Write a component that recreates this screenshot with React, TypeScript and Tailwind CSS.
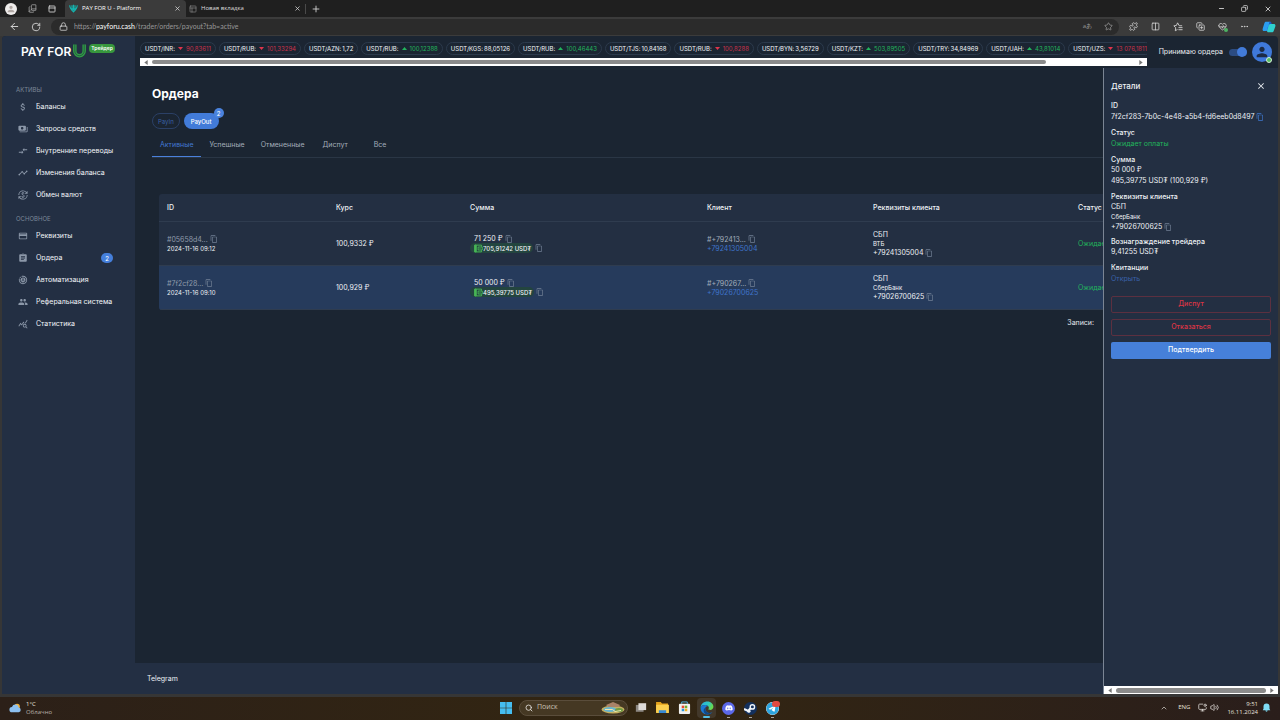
import type { ReactNode } from "react";
import {
  MdAttachMoney, MdPayments, MdCompareArrows, MdTimeline, MdCurrencyExchange, MdOutlineCreditCard,
  MdAssignment, MdMotionPhotosAuto, MdPeople, MdQueryStats, MdContentCopy, MdClose, MdPerson,
} from "react-icons/md";
import { FaDiscord, FaSteam, FaTelegram } from "react-icons/fa6";
import {
  ArrowLeft, RotateCw, Lock, Star, X, Plus, Minus, Copy, Puzzle, Columns2, Ellipsis, PanelTop,
  Search, ChevronUp, Volume2, MonitorDot, PanelsTopLeft, HeartPulse, BookCopy, CopyPlus,
} from "lucide-react";

type Rate = { pair: string; value: string; trend?: "up" | "down" };

const rates: Rate[] = [
  { pair: "USDT/INR:", value: "90,83611", trend: "down" },
  { pair: "USDT/RUB:", value: "101,33294", trend: "down" },
  { pair: "USDT/AZN:", value: "1,72" },
  { pair: "USDT/RUB:", value: "100,12388", trend: "up" },
  { pair: "USDT/KGS:", value: "88,05126" },
  { pair: "USDT/RUB:", value: "100,46443", trend: "up" },
  { pair: "USDT/TJS:", value: "10,84168" },
  { pair: "USDT/RUB:", value: "100,8288", trend: "down" },
  { pair: "USDT/BYN:", value: "3,56729" },
  { pair: "USDT/KZT:", value: "503,89505", trend: "up" },
  { pair: "USDT/TRY:", value: "34,84969" },
  { pair: "USDT/UAH:", value: "43,81014", trend: "up" },
  { pair: "USDT/UZS:", value: "13 076,1811", trend: "down" },
];

const assets = [
  { label: "Балансы", Icon: MdAttachMoney },
  { label: "Запросы средств", Icon: MdPayments },
  { label: "Внутренние переводы", Icon: MdCompareArrows },
  { label: "Изменения баланса", Icon: MdTimeline },
  { label: "Обмен валют", Icon: MdCurrencyExchange },
];

const general = [
  { label: "Реквизиты", Icon: MdOutlineCreditCard },
  { label: "Ордера", Icon: MdAssignment, count: 2 },
  { label: "Автоматизация", Icon: MdMotionPhotosAuto },
  { label: "Реферальная система", Icon: MdPeople },
  { label: "Статистика", Icon: MdQueryStats },
];

const orders = [
  { id: "#05658d4...", date: "2024-11-16 09:12", rate: "100,9332 ₽", sum: "71 250 ₽", usdt: "705,91242 USD₮", client: "#+792413...", phone: "+79241305004", bank: "ВТБ" },
  { id: "#7f2cf28...", date: "2024-11-16 09:10", rate: "100,929 ₽", sum: "50 000 ₽", usdt: "495,39775 USD₮", client: "#+790267...", phone: "+79026700625", bank: "СберБанк", selected: true },
];

const ui = "font-['Open_Sans','Noto_Sans',sans-serif]";

function CopyButton({ blue = false }: { blue?: boolean }) {
  return (
    <button aria-label="Копировать" className={blue ? "shrink-0 text-[#3f78d0]" : "shrink-0 text-[#728095]"}>
      <MdContentCopy className="size-2" />
    </button>
  );
}

function EdgeLogo() {
  return (
    <svg viewBox="0 0 24 24" className="size-3.5">
      <defs>
        <linearGradient id="edge-top" x1="0" y1="0" x2="1" y2="0.4">
          <stop offset="0" stopColor="#2aa9e6" />
          <stop offset="0.6" stopColor="#2fc8c0" />
          <stop offset="1" stopColor="#68d84c" />
        </linearGradient>
      </defs>
      <path d="M1 11C2 4.500 7 1 12.500 1 19 1 23 5.500 23 10c0 3.500-2.500 5.500-5.500 5.500-2 0-3.500-.8-3.200-1.600.9-1.200.9-1.900.9-2.400C15 9 12 7 8.500 7 5 7 2 8.500 1 11z" fill="url(#edge-top)" />
      <path d="M1 11c1-2.500 4-4 7.500-4C11 7 13 8 14 9.300c-3-.8-5 1.200-5 4C9 18 13 21 17 20.500c1.800-.2 3.300-.9 4.500-1.700C19.500 21.500 16 23 12.500 23 6 23 .5 18 1 11z" fill="#1b78d4" />
      <path d="M9 13.300c0 4.700 4 7.700 8 7.200 1.800-.2 3.300-.9 4.500-1.700-2 2.700-5.500 4.200-9 4.200C8 23 6 19 6.200 16 6.400 14 7.500 12.500 9.300 11.500 9 12 9 12.700 9 13.300z" fill="#114a8b" />
    </svg>
  );
}

function CopilotLogo() {
  return (
    <svg viewBox="0 0 24 24" className="size-3.5">
      <path d="M7 3h6c2 0 2.600 1 2 3l-3 10c-.6 2-1.600 3-3.500 3H4c-3 0-3.500-2-2.700-4.500l2.500-8C4.500 4 5.500 3 7 3z" fill="#2b9df0" />
      <path d="M13 3c2 0 3 1 3.500 3L17 8h-3.500c-2 0-2.500 1-3 2.500L8.300 18c-.5 1-1.300 1-2.300 1 2 0 3-1.500 3.500-3l2.500-9c.5-2 .4-4 1-4z" fill="#1b56c9" />
      <path d="M15 7h5c3 0 3.500 2 2.700 4.500l-2.500 7c-.7 2-1.700 2.500-3.200 2.500h-6c-2 0-2.500-1-2-3l2.500-8C12 8 13 7 15 7z" fill="#2fd0cf" />
    </svg>
  );
}

function FavoritesIcon() {
  return (
    <svg viewBox="0 0 24 24" className="size-[10px]" fill="none" stroke="currentColor" strokeWidth="2" strokeLinecap="round" strokeLinejoin="round">
      <path d="M21 9h-6L11 2 8.200 8.300 2 9.200l4.500 4.600L5.500 21l4.500-2.700M14 13.500h8M14 18.500h8" />
    </svg>
  );
}

function BrowserChrome() {
  return (
    <header className={`${ui} text-[#dcdcdc]`}>
      <div className="flex h-[17px] items-center bg-[#1f1f1f]">
        <div className="flex w-[65px] items-center gap-[11px] pl-[5px]">
          <span className="flex size-3 items-center justify-center rounded-full bg-[#efedec] text-[#b0a8a4]"><MdPerson className="size-[10px]" /></span>
          <BookCopy className="size-[9px] text-[#a8a8a8]" strokeWidth={2} />
          <PanelTop className="size-2" strokeWidth={2.500} />
        </div>
        <div className="flex h-full w-[121px] items-center rounded-t-[4px] bg-[#3b3b3b] pr-[5px] pl-1">
          <svg viewBox="0 0 24 24" className="size-[9px]" fill="none" stroke="#14b5b0" strokeWidth="3">
            <path d="M2 3c0 8 4 12 10 18 6-6 10-10 10-18M8 3v9l4 4 4-4V3M12 2v12" />
          </svg>
          <span className="ml-1 flex-1 text-[6px] text-white">PAY FOR U - Platform</span>
          <button aria-label="Закрыть вкладку"><X className="size-[7px]" strokeWidth={2.500} /></button>
        </div>
        <div className="flex w-[119px] items-center pr-1 pl-[3px]">
          <PanelsTopLeft className="size-2 text-[#8b8b8b]" strokeWidth={2} />
          <span className="ml-1 flex-1 text-[6px]">Новая вкладка</span>
          <button aria-label="Закрыть вкладку"><X className="size-[7px]" strokeWidth={2.500} /></button>
        </div>
        <button aria-label="Новая вкладка" className="border-l border-[#4a4a4a] pl-[5px]"><Plus className="size-[10px]" /></button>
        <div className="ml-auto flex items-center gap-4 pr-2">
          <button aria-label="Свернуть"><Minus className="size-[7px]" strokeWidth={3} /></button>
          <button aria-label="Восстановить"><Copy className="size-[7px] rotate-90" strokeWidth={2.500} /></button>
          <button aria-label="Закрыть"><X className="size-2" strokeWidth={2.500} /></button>
        </div>
      </div>
      <div className="flex h-[19px] items-center bg-[#3b3b3b] pr-1 pl-[9px]">
        <button aria-label="Назад"><ArrowLeft className="size-[11px]" /></button>
        <button aria-label="Обновить" className="ml-[11px]"><RotateCw className="size-[10px]" /></button>
        <div className="ml-2.5 flex h-4 flex-1 items-center rounded-full bg-[#2b2b2b] pr-1.5 pl-2">
          <Lock className="size-[9px]" strokeWidth={2} />
          <span className="ml-1.5 font-[Lato,sans-serif] text-[7px] text-[#979797]">https://<span className="text-white">payforu.cash</span>/trader/orders/payout?tab=active</span>
          <span className="ml-auto text-[6px] text-[#9a9a9a]">аあ</span>
          <Star className="ml-3 size-[9px] text-[#9a9a9a]" />
        </div>
        <div className="ml-2.5 flex items-center gap-[13px]">
          <Puzzle className="size-[9px]" />
          <Columns2 className="size-[9px]" />
          <FavoritesIcon />
          <CopyPlus className="size-[9px]" />
          <span className="relative">
            <HeartPulse className="size-[9px]" />
            <span className="absolute -right-px -bottom-px size-1 rounded-full bg-[#4db363]" />
          </span>
          <Ellipsis className="size-[9px]" />
          <CopilotLogo />
        </div>
      </div>
    </header>
  );
}

function NavGroup({ title, items }: { title: string; items: { label: string; Icon: typeof MdPeople; count?: number }[] }) {
  return (
    <section className="mb-px">
      <h2 className="h-[18px] pt-[7px] pl-3.5 text-[6px] leading-[9px] text-[#7b8798]">{title}</h2>
      {items.map(({ label, Icon, count }) => (
        <a key={label} href="#" className="flex h-[22px] items-center pr-[22px] pl-4 text-[7px] whitespace-nowrap text-[#f1f4f8]">
          <Icon className="size-[10px] shrink-0 text-[#8c98a9]" />
          <span className="ml-2">{label}</span>
          {count && <span className="ml-auto flex h-[10px] w-3 items-center justify-center rounded-full bg-[#457fdb] text-[6px] font-medium text-white">{count}</span>}
        </a>
      ))}
    </section>
  );
}

function Sidebar() {
  return (
    <aside className="w-[133px] shrink-0 bg-[#232f43]">
      <div className="flex h-[42px] items-start pt-[7px] pl-[19px]">
        <span className="text-[12px] leading-[18px] font-semibold whitespace-nowrap text-white">PAY FOR</span>
        <svg viewBox="0 0 30 32" className="mt-px ml-px h-[15px] w-[15px] shrink-0" fill="none">
          <path d="M5 1v14a10 10 0 0 0 20 0V1" stroke="#2f9e44" strokeWidth="7.500" />
          <path d="M5 1v14a10 10 0 0 0 20 0V1" stroke="#232f43" strokeWidth="1.300" />
        </svg>
        <span className="mt-px ml-0.5 flex h-[9px] items-center rounded-sm bg-[#37973d] px-0.5 text-[5px] font-semibold text-white">Трейдер</span>
      </div>
      <nav>
        <NavGroup title="АКТИВЫ" items={assets} />
        <NavGroup title="ОСНОВНОЕ" items={general} />
      </nav>
    </aside>
  );
}

function ScrollTrack({ children }: { children: ReactNode }) {
  return (
    <div className="flex h-2 shrink-0 items-center bg-white px-1">
      <svg viewBox="0 0 4 6" className="h-[5px] w-1 shrink-0"><path d="M4 0v6L0 3z" fill="#777" /></svg>
      <div className="mx-1 flex-1">{children}</div>
      <svg viewBox="0 0 4 6" className="h-[5px] w-1 shrink-0"><path d="M0 0v6l4-3z" fill="#777" /></svg>
    </div>
  );
}

function TrendArrow({ trend }: { trend: "up" | "down" }) {
  return (
    <svg viewBox="0 0 5 3" className="mx-[3px] h-[3px] w-[5px]">
      {trend === "up" ? <path d="M0 3h5L2.500 0z" fill="#22b45c" /> : <path d="M0 0h5L2.500 3z" fill="#e0354c" />}
    </svg>
  );
}

function TopBar() {
  return (
    <div className="flex h-8 pl-[5px]">
      <div className="min-w-0 flex-1">
        <div className="flex h-[22px] items-center gap-[3px] overflow-hidden pt-0.5">
          {rates.map((r, i) => (
            <div key={i} className="flex h-[13px] shrink-0 items-center rounded-full border border-[#2c3a4c] px-1 text-[6px] whitespace-nowrap text-[#f3f6f9]">
              {r.pair}
              {r.trend && <TrendArrow trend={r.trend} />}
              <span className={r.trend === "up" ? "text-[#22b45c]" : r.trend === "down" ? "text-[#c9314a]" : "ml-px"}>{r.value}</span>
            </div>
          ))}
        </div>
        <ScrollTrack><div className="h-1 w-[91%] rounded-full bg-[#8b8b8b]" /></ScrollTrack>
      </div>
      <div className="flex items-center pr-1.5 pl-3">
        <label htmlFor="accept" className="text-[7px] text-[#e8ecf1]">Принимаю ордера</label>
        <span className="relative ml-1.5 flex h-2 w-[18px] items-center">
          <input id="accept" type="checkbox" defaultChecked className="h-[7px] w-full appearance-none rounded-full bg-[#2c4c82]" />
          <span className="pointer-events-none absolute right-0 size-[10px] rounded-full bg-[#427bd9]" />
        </span>
        <button aria-label="Профиль" className="relative ml-[5px] flex size-5 items-center justify-center rounded-full bg-[#3f79da] text-[#1c2b45]">
          <MdPerson className="size-4" />
          <span className="absolute right-0 -bottom-px size-[6px] rounded-full border border-[#d5efd8] bg-[#58bd62]" />
        </button>
      </div>
    </div>
  );
}

function WalletIcon() {
  return (
    <svg viewBox="0 0 24 24" className="size-[9px] shrink-0" fill="none" stroke="#48b556" strokeWidth="2.500">
      <path d="M20 7V3H2v18h18v-4" />
      <path d="M2 3h4v18H2z" fill="#48b556" />
      <path d="M11 8h11v8H11z" />
      <circle cx="16" cy="12" r="0.500" />
    </svg>
  );
}

function OrdersTable() {
  return (
    <table className="w-full table-fixed border-separate border-spacing-0 overflow-hidden rounded-[3px] bg-[#232f42] text-left text-[7px] whitespace-nowrap text-[#eef1f5]">
      <thead>
        <tr className="h-7 [&>th]:border-b [&>th]:border-[#2f3c4f] [&>th]:px-2 [&>th]:pt-px [&>th]:pb-0 [&>th]:font-medium">
          <th className="w-[169px]">ID</th>
          <th className="w-[134px]">Курс</th>
          <th className="w-[237px]">Сумма</th>
          <th className="w-[166px]">Клиент</th>
          <th className="w-[205px]">Реквизиты клиента</th>
          <th>Статус</th>
        </tr>
      </thead>
      <tbody className="[&_td]:border-b [&_td]:border-[#2f3c4f] [&_td]:px-2 [&_td]:py-0">
        {orders.map((o) => (
          <tr key={o.id} className={o.selected ? "h-11 bg-[#263b5c] leading-[9px]" : "h-11 leading-[9px]"}>
            <td>
              <div className="flex items-center gap-0.5 text-[#8f9bab]">{o.id}<CopyButton /></div>
              <div className="text-[6px]">{o.date}</div>
            </td>
            <td>{o.rate}</td>
            <td>
              <div className="flex items-center gap-0.5 pl-1">{o.sum}<CopyButton /></div>
              <div className="flex items-center gap-0.5">
                <span className="flex h-[10px] items-center rounded-full bg-[#23453f] pr-0.5 pl-1 text-[6px] font-medium"><WalletIcon />{o.usdt}</span>
                <CopyButton />
              </div>
            </td>
            <td>
              <div className="flex items-center gap-0.5 text-[#a2adba]">{o.client}<CopyButton /></div>
              <a href="#" className="block text-[#3f74cb]">{o.phone}</a>
            </td>
            <td>
              <div>СБП</div>
              <div className="text-[6px]">{o.bank}</div>
              <div className="flex items-center gap-0.5">{o.phone}<CopyButton /></div>
            </td>
            <td className="text-[#22b45c]">Ожидает оплаты</td>
          </tr>
        ))}
      </tbody>
    </table>
  );
}

function Orders() {
  return (
    <main className="flex-1 pt-[18px] pl-[17px]">
      <h1 className="text-[12px] leading-4 font-bold text-white">Ордера</h1>
      <div className="mt-[11px] flex gap-1 text-[6px]">
        <button className="h-4 rounded-full border border-[#2b4066] px-[5px] text-[#3a60a6]">PayIn</button>
        <button className="relative h-4 rounded-full bg-[#427bd8] px-[7px] font-medium text-white">
          PayOut
          <span className="absolute -top-[5px] -right-[5px] flex size-[10px] items-center justify-center rounded-full bg-[#4a83de] text-[6px]">2</span>
        </button>
      </div>
      <div role="tablist" className="mt-[5px] flex h-6 border-b border-[#2a3645] text-[7px] text-[#a3adba]">
        <button role="tab" aria-selected="true" className="min-w-[45px] border-b border-[#4a80dc] px-2 text-[#4379d4]">Активные</button>
        <button role="tab" className="min-w-[45px] px-2">Успешные</button>
        <button role="tab" className="min-w-[45px] px-2">Отмененные</button>
        <button role="tab" className="min-w-[45px] px-2">Диспут</button>
        <button role="tab" className="min-w-[45px] px-2">Все</button>
      </div>
      <div className="pt-9 pr-6 pl-[7px]">
        <OrdersTable />
        <div className="flex justify-end pt-2 pr-40 text-[7px] text-[#e3e7ed]">Записи:</div>
      </div>
    </main>
  );
}

function Section({ title, children }: { title: string; children: ReactNode }) {
  return (
    <section className="mb-1.5 leading-[10px]">
      <h3 className="font-medium">{title}</h3>
      {children}
    </section>
  );
}

function DetailsDrawer() {
  return (
    <aside className="absolute inset-y-0 right-0 flex w-[175px] flex-col border-l border-[#7b8594] bg-[#232f42] text-[7px] text-[#eef1f5]">
      <div className="flex-1 px-[7px] pt-3">
        <div className="mb-[9px] flex h-3 items-center justify-between pr-[5px]">
          <h2 className="text-[8px] font-medium">Детали</h2>
          <button aria-label="Закрыть"><MdClose className="size-[10px]" /></button>
        </div>
        <Section title="ID">
          <div className="flex items-center gap-0.5 leading-[11px] whitespace-nowrap">7f2cf283-7b0c-4e48-a5b4-fd6eeb0d8497<CopyButton blue /></div>
        </Section>
        <Section title="Статус"><div className="leading-[11px] text-[#22b45c]">Ожидает оплаты</div></Section>
        <Section title="Сумма">
          <div>50 000 ₽</div>
          <div className="leading-[11px]">495,39775 USD₮ (100,929 ₽)</div>
        </Section>
        <Section title="Реквизиты клиента">
          <div>СБП</div>
          <div className="text-[6px]">СберБанк</div>
          <div className="flex items-center gap-0.5 leading-[9px]">+79026700625<CopyButton /></div>
        </Section>
        <Section title="Вознаграждение трейдера"><div>9,41255 USD₮</div></Section>
        <Section title="Квитанции"><a href="#" className="block leading-[11px] text-[#3a62ab]">Открыть</a></Section>
        <div className="mt-3 flex flex-col gap-1.5 font-medium">
          <button className="h-[17px] rounded-[2px] border border-[#5c3040] text-[#dc3545]">Диспут</button>
          <button className="h-[17px] rounded-[2px] border border-[#5c3040] text-[#dc3545]">Отказаться</button>
          <button className="h-[17px] rounded-[2px] bg-[#4680da] text-white">Подтвердить</button>
        </div>
      </div>
      <ScrollTrack><div className="h-[5px] w-full rounded-full bg-[#8b8b8b]" /></ScrollTrack>
    </aside>
  );
}

function Taskbar() {
  return (
    <footer className={`${ui} grid h-[23px] shrink-0 grid-cols-[1fr_auto_1fr] items-center bg-linear-to-r from-[#2c2018] via-[#332611] to-[#2a1e1b] pb-0.5 text-[6px] text-[#e6e2dd]`}>
      <div className="flex items-center gap-1 pl-[9px]">
        <svg viewBox="0 0 24 18" className="h-[10px] w-[13px]">
          <circle cx="15" cy="6" r="5" fill="#f2b23c" />
          <path d="M6 17a5 5 0 0 1-.5-10A6.500 6.500 0 0 1 18 8a4.600 4.600 0 0 1 0 9z" fill="#8cc0f0" />
        </svg>
        <div className="leading-2"><div>1°C</div><div className="text-[#b9b2aa]">Облачно</div></div>
      </div>
      <div className="flex items-center pl-0.5">
        <svg viewBox="0 0 12 12" className="size-3" fill="#45bdf0"><path d="M0 0h5.700v5.700H0zM6.300 0H12v5.700H6.300zM0 6.300h5.700V12H0zM6.300 6.300H12V12H6.300z" /></svg>
        <label className="mr-[3px] ml-[7px] flex h-4 w-[109px] items-center rounded-full border border-[#5a4d3b] bg-[#453823] pr-0.5 pl-[5px]">
          <Search className="size-2" strokeWidth={2.500} />
          <input type="search" aria-label="Поиск" placeholder="Поиск" className="ml-1 min-w-0 flex-1 bg-transparent text-[7px] placeholder:text-[#c9c2b6]" />
          <svg viewBox="0 0 48 26" className="h-[13px] w-6">
            <ellipse cx="24" cy="17" rx="23" ry="8" fill="#c6b060" />
            <ellipse cx="18" cy="17" rx="13" ry="5" fill="#68b5cf" />
            <ellipse cx="36" cy="18" rx="8" ry="4" fill="#6e9a43" />
            <path d="M10 8l14-6 14 6-3 4H14z" fill="#a98268" />
            <path d="M8 17h15l5 4 12-2" stroke="#f1e6b0" strokeWidth="2" fill="none" />
          </svg>
        </label>
        <div className="flex items-center gap-[3px]">
          <span className="flex w-[19px] justify-center">
            <svg viewBox="0 0 14 12" className="h-[11px] w-3"><path d="M1 3h9v8H1z" fill="#8b8782" /><path d="M4 1h9v8H4z" fill="#dedbd7" /></svg>
          </span>
          <span className="flex w-[19px] justify-center">
            <svg viewBox="0 0 14 12" className="h-[11px] w-[13px]"><path d="M0 0h5l1.500 1.500H13V11H0z" fill="#e5a31c" /><path d="M0 3h14v9H0z" fill="#fcd04f" /><path d="M3 9h8v3H3z" fill="#3689d4" /></svg>
          </span>
          <span className="flex w-[19px] justify-center">
            <svg viewBox="0 0 14 14" className="size-[13px]"><path d="M4 3V1h6v2" stroke="#49b4e6" fill="none" /><rect x="1" y="3" width="12" height="11" rx="1" fill="#f1f1ef" /><path d="M4 5h2.700v2.700H4z" fill="#e64a32" /><path d="M7.300 5H10v2.700H7.300z" fill="#6cae2e" /><path d="M4 8.300h2.700V11H4z" fill="#2996dd" /><path d="M7.300 8.300H10V11H7.300z" fill="#f1b01f" /></svg>
          </span>
          <span className="flex h-5 w-[19px] flex-col items-center justify-end gap-px rounded-sm bg-[#42382a]"><EdgeLogo /><span className="h-0.5 w-[7px] rounded-full bg-[#55bfe8]" /></span>
          <span className="flex h-5 w-[19px] flex-col items-center justify-end gap-[2px]">
            <span className="flex size-[13px] items-center justify-center rounded-full bg-[#5b68e8] text-white"><FaDiscord className="size-2" /></span><span className="h-px w-[3px] bg-[#a8a29a]" />
          </span>
          <span className="flex h-5 w-[19px] flex-col items-center justify-end gap-[2px]">
            <svg viewBox="0 0 24 24" className="size-[13px]">
              <circle cx="12" cy="12" r="12" fill="#14305c" />
              <path d="M0 13l8 3.500 4-5" stroke="#f1f5fa" strokeWidth="4" fill="none" />
              <circle cx="15.500" cy="9" r="4" fill="#14305c" stroke="#f1f5fa" strokeWidth="2.500" />
              <circle cx="9" cy="17" r="3" fill="#f1f5fa" />
            </svg>
            <span className="h-px w-[3px] bg-[#a8a29a]" />
          </span>
          <span className="relative flex h-5 w-[19px] flex-col items-center justify-end gap-[2px]">
            <FaTelegram className="size-[13px] rounded-full bg-white text-[#2da5df]" /><span className="h-px w-[3px] bg-[#a8a29a]" />
            <span className="absolute top-[3px] right-0.5 h-1.5 w-2 rounded-full bg-[#e24a41]" />
          </span>
        </div>
      </div>
      <div className="flex items-center justify-end pr-[9px]">
        <ChevronUp className="size-2" />
        <span className="ml-2.5">ENG</span>
        <MonitorDot className="ml-2 size-[9px]" />
        <Volume2 className="ml-[3px] size-[9px]" />
        <div className="ml-2 text-right leading-2"><div>9:51</div><div>16.11.2024</div></div>
        <svg viewBox="0 0 24 24" className="ml-1 size-[9px]" fill="#7fdcf5"><path d="M12 1a8 8 0 0 0-8 8v6l-2 4h20l-2-4V9a8 8 0 0 0-8-8zM9 20a3 3 0 0 0 6 0z" /></svg>
      </div>
    </footer>
  );
}

export default function App() {
  return (
    <div className="flex min-h-screen flex-col bg-[#363636]">
      <BrowserChrome />
      <div className="mx-0.5 mb-[3px] flex flex-1 overflow-hidden rounded-t-[4px] bg-[#1b2532] font-[Inter,sans-serif]">
        <Sidebar />
        <div className="flex min-w-0 flex-1 flex-col">
          <TopBar />
          <div className="relative flex flex-1 flex-col overflow-hidden">
            <Orders />
            <div className="flex h-[31px] items-center bg-[#232f43] pt-px pl-3 text-[7px] text-[#eef1f5]"><a href="#">Telegram</a></div>
            <DetailsDrawer />
          </div>
        </div>
      </div>
      <Taskbar />
    </div>
  );
}
